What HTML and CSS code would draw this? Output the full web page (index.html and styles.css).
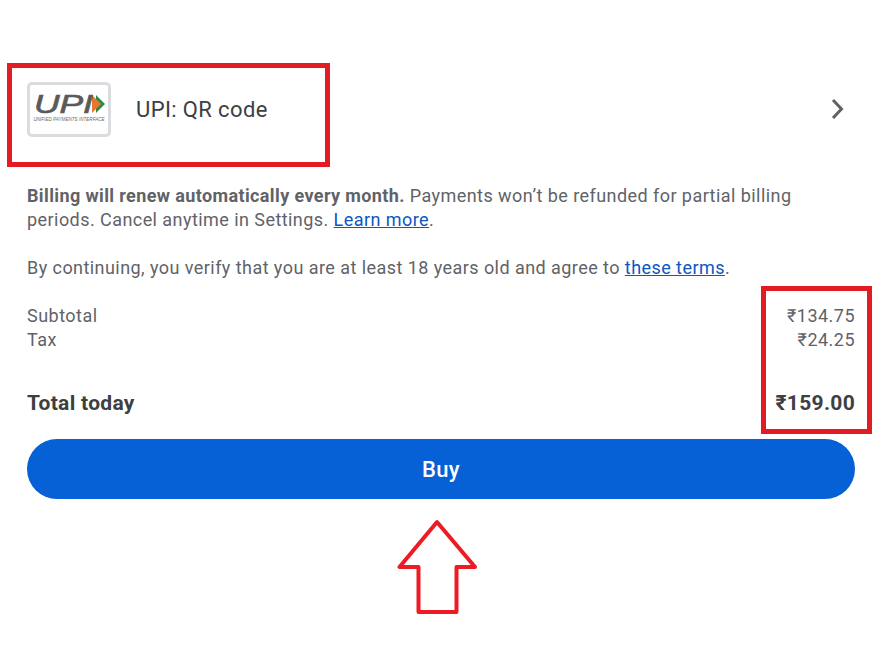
FILE: index.html
```html
<!DOCTYPE html>
<html lang="en">
<head>
    <meta charset="UTF-8">
    <title>Checkout</title>
    <link rel="stylesheet" href="styles.css">
</head>
<body>
    <div class="checkout">
        <div class="method-row">
            <div class="upi-logo">
                <div class="upi-mark">
                    <span class="upi-letters">UPI</span>
                    <svg class="upi-arrow" width="13" height="18" viewBox="0 0 13 18">
                        <path d="M4 0l9 9-9 9z" fill="#2e8b45"/>
                        <path d="M0 0l9 9-9 9z" fill="#e8772e"/>
                    </svg>
                </div>
                <div class="upi-tag">UNIFIED PAYMENTS INTERFACE</div>
            </div>
            <span class="method-name">UPI: QR code</span>
            <svg class="chevron" width="14" height="20" viewBox="0 0 14 20">
                <path d="M2 1l8.500 9L2 19" fill="none" stroke="#5f6368" stroke-width="3"/>
            </svg>
        </div>

        <p class="notice"><b>Billing will renew automatically every month.</b> Payments won’t be refunded for partial billing periods. Cancel anytime in Settings. <a href="#">Learn more</a>.</p>
        <p class="notice terms">By continuing, you verify that you are at least 18 years old and agree to <a href="#">these terms</a>.</p>

        <div class="price-line first"><span>Subtotal</span><span>₹134.75</span></div>
        <div class="price-line"><span>Tax</span><span>₹24.25</span></div>
        <div class="price-total"><span>Total today</span><span>₹159.00</span></div>

        <button class="buy-btn">Buy</button>
    </div>

    <!-- red annotations drawn on top of the screenshot -->
    <div class="mark mark-method"></div>
    <div class="mark mark-prices"></div>
    <svg class="mark-arrow" width="90" height="104" viewBox="0 0 90 104">
        <path d="M40 3L2.500 48h19v45h38V48H78z" fill="none" stroke="#ed1c24" stroke-width="4" stroke-linejoin="round"/>
    </svg>
</body>
</html>
```

FILE: styles.css
```css
* {
    margin: 0;
    padding: 0;
    box-sizing: border-box;
}

body {
    width: 885px;
    height: 670px;
    background: #fff;
    font-family: Roboto, sans-serif;
    color: #5f6368;
    overflow: hidden;
    position: relative;
}

.checkout {
    padding: 82px 30px 0 27px;
}

.method-row {
    display: flex;
    align-items: center;
    height: 54px;
}

.upi-logo {
    width: 84px;
    height: 55px;
    border: 3px solid #dadce0;
    border-radius: 5px;
    display: flex;
    flex-direction: column;
    align-items: center;
    justify-content: center;
}

.upi-mark {
    display: flex;
    align-items: center;
    height: 18px;
}

.upi-letters {
    width: 58px;
    font-family: "Liberation Sans", sans-serif;
    font-style: italic;
    font-size: 26px;
    line-height: 18px;
    color: #5a5a5c;
    -webkit-text-stroke: 0.7px #5a5a5c;
    transform: scaleX(1.36);
    transform-origin: left center;
}

.upi-tag {
    font-family: "Liberation Sans", sans-serif;
    font-style: italic;
    font-size: 4.6px;
    line-height: 7px;
    color: #6a6a6c;
    margin-top: 3px;
    white-space: nowrap;
}

.method-name {
    margin-left: 25px;
    font-size: 22px;
    letter-spacing: 0.38px;
    color: #3c4043;
    flex: 1;
}

.chevron {
    margin-right: 10px;
}

.notice {
    font-size: 18px;
    letter-spacing: 0.44px;
    line-height: 24px;
    margin-top: 48px;
}

.notice.terms {
    margin-top: 24px;
}

.notice b {
    font-weight: 700;
    letter-spacing: 0.38px;
}

.notice a {
    color: #0b57c4;
}

.price-line {
    display: flex;
    justify-content: space-between;
    font-size: 18px;
    letter-spacing: 0.48px;
    line-height: 24px;
}

.price-line.first {
    margin-top: 24px;
}

.price-total {
    display: flex;
    justify-content: space-between;
    font-size: 21px;
    letter-spacing: 0.3px;
    font-weight: 700;
    line-height: 28px;
    color: #3c4043;
    margin-top: 37px;
}

.buy-btn {
    display: block;
    width: 100%;
    height: 60px;
    margin-top: 22px;
    border: none;
    border-radius: 30px;
    background: #0660d6;
    color: #fff;
    font-family: Roboto, sans-serif;
    font-size: 22px;
    letter-spacing: 0.3px;
    font-weight: 500;
}

.mark {
    position: absolute;
    border: 5px solid #e31b23;
}

.mark-method {
    left: 7px;
    top: 63px;
    width: 323px;
    height: 104px;
}

.mark-prices {
    left: 761px;
    top: 286px;
    width: 111px;
    height: 148px;
}

.mark-arrow {
    position: absolute;
    left: 397px;
    top: 519px;
}
```
